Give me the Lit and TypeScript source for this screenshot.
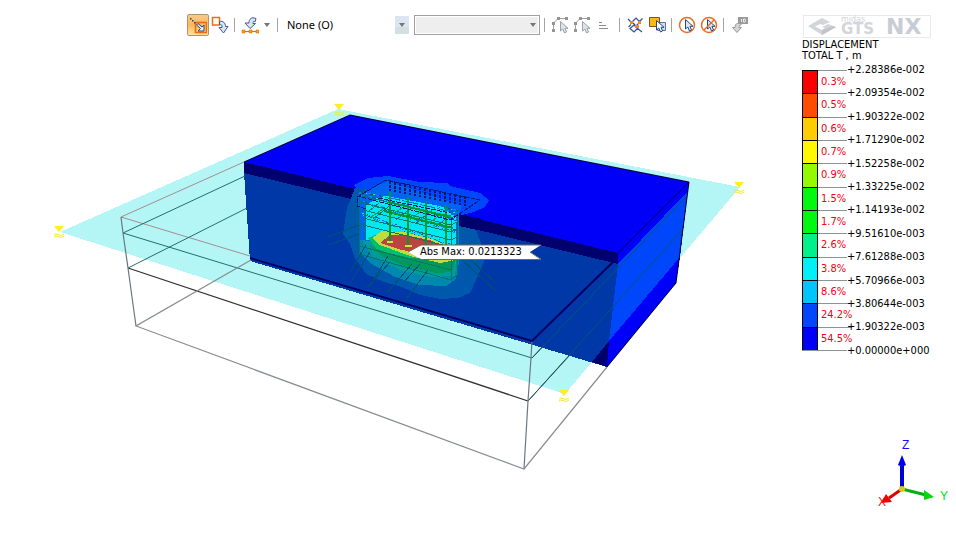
import { LitElement, html, svg, css } from "lit";
import { customElement } from "lit/decorators.js";

const FONT = css`"DejaVu Sans Condensed", "DejaVu Sans", sans-serif`;

type Point = [number, number];

const cursor = (x: number, y: number, fill = "#dbe6f5", stroke = "#27477f") => svg`
  <path transform="translate(${x} ${y})" d="M0.5 0.5V10L2.8 8L4.5 12L6.5 11L5 7.3H8Z" fill=${fill} stroke=${stroke} />`;

const icons = {
  snap: svg`
    <rect x="6.5" y="6.500" width="11" height="10" fill="none" stroke="#f06a10" stroke-width="1.600"/>
    <path d="M1 2h1.500v1.500H1zM3 4h1.500v1.500H3zM5 6h1.500v1.500H5z" fill="#27477f"/>
    <path d="M7.500 9L9 7.500L13 11L15 9V15H9L11.500 12.500Z" fill="#e8eef8" stroke="#27477f"/>`,
  move: svg`
    <rect x="1.500" y="1.500" width="7" height="7.500" fill="none" stroke="#f06a10" stroke-width="1.500"/>
    <path d="M8.500 5.500C12 4.500 14.500 7 14.500 10.500H17L12.500 17L8 11.500L11 11.500C11.500 9 10 8 8.500 8.500Z" fill="#dbe6f5" stroke="#3a5c96"/>`,
  pick: svg`
    <path d="M15 2.500C10.500 0.500 8 3 8 7H4L9 12.500L14.500 7.500L12 7.500C12 5.500 12.500 4.500 14 6Z" fill="#dbe6f5" stroke="#3a5c96"/>
    <path d="M2 15.500H17" stroke="#f06a10"/>
    <path d="M1 14h3v3H1zM8 14h3v3H8zM15 14h3v3h-3z" fill="#f7a800" stroke="#d8540c" stroke-width="0.5"/>`,
  poly: svg`
    <path d="M2.500 15V7L7 2.500H15" fill="none" stroke="#a0a0a0"/>
    <path d="M1 6h3v3H1zM1 13h3v3H1zM6 1h3v3H6zM14 1h3v3h-3z" fill="#959595"/>
    ${cursor(9, 5, "#dde3e6", "#98a2a8")}`,
  list: svg`
    <path d="M4 6.500H7M4 9.500H11M4 12.500H13" stroke="#8c8c8c"/>`,
  mesh: svg`
    <path d="M2 3L6 7M6 6L10 2L14 6L10 10L6 6M8 9L4 12.500L8 16L11.500 12.500L8 9M11 12L16 16M13 6L16.500 2.500M2.500 11L5 8.500" fill="none" stroke="#31548f" stroke-width="1.200"/>
    <path d="M4 5h3v3H4zM12 5h3v3h-3zM9 9h4v3H9z" fill="#f58a12"/>`,
  layers: svg`
    <path d="M9.500 6.500H17.500V14.500H9.500Z" fill="#cfdcf0" stroke="#5876a8"/>
    <path d="M1.500 1.500H11.500V10.500H1.500Z" fill="#fdb813" stroke="#70582a"/>
    ${cursor(8, 4, "#ffffff")}`,
  circle: svg`
    <circle cx="9" cy="9" r="7.500" fill="#fff" stroke="#ee6c22" stroke-width="1.500"/>
    ${cursor(7, 3)}`,
  circleOff: svg`
    <circle cx="9" cy="9" r="7.500" fill="#fff" stroke="#ee6c22" stroke-width="1.500"/>
    ${cursor(7, 3)}
    <path d="M4 14L14 4" stroke="#ee6c22" stroke-width="1.500"/>`,
  tag: svg`
    <path d="M8 1H18V8H8Z" fill="#9a9a9a"/>
    <path d="M11.500 3V6M13.500 3V6H15L15.500 4.500L15 3Z" fill="none" stroke="#fff" stroke-width="0.800"/>
    <path d="M7.500 7.500H11V9C9.500 9 9 10 9 11.500H11.500L7 16.500L2.500 11.500H5C5 9 6 7.500 7.500 7.500Z" fill="#d5d5d5" stroke="#9a9a9a"/>`,
};

@customElement("view-toolbar")
class ViewToolbar extends LitElement {
  static styles = css`
    :host { display: block; }
    .bar { display: flex; align-items: center; height: 36px; padding: 7px 0 1px 187px; }
    .tool { box-sizing: border-box; display: flex; align-items: center; justify-content: center; flex: none; width: 22px; height: 22px; padding: 0; border: 1px solid transparent; background: none; border-radius: 2px; }
    .tool.on { border-color: #b5936a; background: linear-gradient(#f8c98a, #fdb85c 50%, #ffe3a0); }
    .icon { width: 18px; height: 18px; flex: none; }
    .tool.menu { width: 12px; }
    .caret { width: 6px; height: 4px; flex: none; }
    .sep { flex: none; width: 1px; height: 14px; margin: 0 4px 0 3px; background: #a5a5a5; }
    .sep.wide { margin: 0 4px; }
    .field { display: grid; align-items: center; flex: none; }
    .field + .field { margin-left: 5px; }
    .field > * { grid-area: 1 / 1; }
    select { appearance: none; box-sizing: border-box; margin: 0; border: 0; border-radius: 0; color: #000; opacity: 1; }
    .kind { width: 127px; height: 18px; padding: 0 5px; font: 11px/18px "Noto Sans", sans-serif; background: linear-gradient(#dce6f2 60%, #d3dfe0 60%) right / 14px 100% no-repeat #fff; }
    .item { width: 126px; height: 20px; border: 1px solid #a0a0a0; background: #eee; box-shadow: inset 0 0 0 1px #fff; }
    .arrow { width: 6px; height: 4px; justify-self: end; margin-right: 4px; pointer-events: none; }
  `;

  private tool(name: keyof typeof icons, label: string, on = false) {
    return html`<button class="tool ${on ? "on" : ""}" aria-label=${label}>
      <svg class="icon" viewBox="0 0 18 18" aria-hidden="true">${icons[name]}</svg>
    </button>`;
  }

  private caret(cls: string) {
    return html`<svg class=${cls} viewBox="0 0 6 4" aria-hidden="true"><path d="M0 0H6L3 4Z" fill="#707878"/></svg>`;
  }

  render() {
    return html`<div class="bar" role="toolbar" aria-label="Selection">
      ${this.tool("snap", "Snap select", true)}
      ${this.tool("move", "Move selection")}
      <span class="sep"></span>
      ${this.tool("pick", "Pick node")}
      <button class="tool menu" aria-label="Pick options">${this.caret("caret")}</button>
      <span class="sep wide"></span>
      <div class="field">
        <select class="kind" aria-label="Selection filter"><option>None (O)</option></select>
        ${this.caret("arrow")}
      </div>
      <div class="field">
        <select class="item" aria-label="Item" disabled><option></option></select>
        ${this.caret("arrow")}
      </div>
      <span class="sep wide"></span>
      ${this.tool("poly", "Polyline select")}
      ${this.tool("poly", "Polygon select")}
      ${this.tool("list", "List")}
      <span class="sep wide"></span>
      ${this.tool("mesh", "Mesh select")}
      ${this.tool("layers", "Front only")}
      <span class="sep"></span>
      ${this.tool("circle", "Select")}
      ${this.tool("circleOff", "Unselect")}
      <span class="sep"></span>
      ${this.tool("tag", "Select by ID")}
    </div>`;
  }
}

@customElement("model-view")
class ModelView extends LitElement {
  static styles = css`
    :host { display: block; }
    .scene { display: block; width: 100%; height: auto; }
    .label { font: 11px ${FONT}; }
  `;

  private marker([x, y]: Point) {
    return svg`<g transform="translate(${x} ${y})">
      <path d="M-5 0H5L0 6Z" fill="#ffee20"/>
      <path d="M-5 9L-3 8L2 9.500L5 8M-5 11L-3 10L2 11.500L5 10" fill="none" stroke="#f2ea2a"/>
    </g>`;
  }

  private speckle() {
    const colors = ["#0060d8", "#0090e0", "#20e8c0", "#005868", "#0078e8"];
    const out = [];
    for (let i = 0; i < 420; i++) {
      const u = ((i * 37) % 97) / 97;
      const v = ((i * 53) % 89) / 89;
      const x = Math.round(362 + u * 95);
      const y = Math.round(192 + u * 18 + v * v * 36);
      out.push(svg`<rect x=${x} y=${y} width=${1 + (i % 2)} height="1" fill=${colors[i % 5]}/>`);
    }
    return out;
  }

  private pit() {
    const columns: [number, number, number][] = [[390, 192, 241], [408, 197, 246], [426, 201, 250], [446, 205, 252]];
    const piles = Array.from({ length: 16 }, (_, i) => [390 + i * 5, 181 + i]);
    const levels = [203, 210, 217, 225, 232];
    return svg`
      <path d="M354 185L368 178L388 176L420 182L447 183L450 186L480 193L489 200L485 207L474 212L458 216L359 192Z" fill="#0046fa"/>
      <path d="M355 188L347 208L343 234L350 244L355 258L366 274L384 282L402 287L420 295L440 299L458 298L470 293L476 280L484 262L482 246L476 230L468 218L460 214L359 188Z" fill="#0058ac"/>
      <path d="M459 214L482 219V231L459 226Z" fill="#00006e"/>
      <path d="M359 192V250L370 263L395 277L420 285L446 286L456 279L459 262V216Z" fill="#0088b0"/>
      <path d="M361 238L372 256L400 270L430 277L455 276L457 255Z" fill="#009c98"/>
      <path d="M358 195L388 181L462 206L458 218L457 250L360 240Z" fill="#0064f0"/>
      <path d="M366 204L386 196L440 206L456 217V252L410 240L366 240Z" fill="#00e8f4"/>
      ${this.speckle()}
      <path d="M368 238L378 234L396 232L430 239L456 248V264L435 269L405 263L380 253Z" fill="#00c070"/>
      <path d="M368 245L385 252L410 258L456 260L452 272L436 273L405 266L382 256Z" fill="#00985c"/>
      <path d="M372 238L382 231L404 232L432 239L455 249V260L440 263L410 256L380 245Z" fill="#bddc40"/>
      <path d="M380 243L390 235L404 235L430 240L452 250L445 257L420 254L398 249Z" fill="#be4242"/>
      <g fill="none" stroke="#087468">
        ${levels.map((y) => svg`<path d="M359 ${y - 8}L451 ${y + 15}L457 ${y + 12}"/>`)}
        <path d="M359 197V254L451 280V217M365 188V240M457 214V275L451 280M359 246L451 270"/>
        <path d="M369 211L379 203M373 219L393 203M396 220L414 206M415 224L432 210M434 228L452 214"/>
      </g>
      <g fill="none" stroke="#009a28" stroke-width="2">
        ${columns.map(([x, a, b]) => svg`<path d="M${x} ${a}V${b}"/>`)}
        <path d="M388 202L451 217M384 211L453 228"/>
      </g>
      <path d="M371 217L383 209M390 215L404 207M410 220L421 211M428 224L440 215" fill="none" stroke="#00a848"/>
      <path d="M387 241h6v2h-6zM405 245h7v2h-7z" fill="#c8e840"/>
      <g fill="none" stroke="#001878">
        <path d="M357 197L386 180L480 200L450 220L357 196V206L366 209M378 198L450 213" stroke-dasharray="5 1"/>
        ${piles.map(([x, y]) => svg`<path d="M${x} ${y}V${y + 10}" stroke-dasharray="3 1" stroke-width="2"/>`)}
      </g>
      <g stroke="#005070" fill="none">
        <path d="M328 237L359 225M328 245L359 234M350 272L366 245M352 280L370 252M370 286L388 256M367 288L390 262M387 293L412 264M407 298L428 270M403 283L420 264M461 259L497 292M471 260L496 283"/>
      </g>`;
  }

  render() {
    const markers: Point[] = [[59, 226], [339, 104], [739, 182], [564, 390]];
    return html`<svg class="scene" viewBox="0 44 802 499" role="img" aria-label="Displacement contour of excavation model">
      <g shape-rendering="crispEdges">
        <path d="M60 232L338 109L740 187L565 394Z" fill="#b4f6f6"/>
        <path d="M350 115L689 182L618 254L244 162Z" fill="#0000f8"/>
        <path d="M244 162L618 253V265L244 173Z" fill="#00006e"/>
        <path d="M244 173L618 264L607 367L250 261Z" fill="#0038a8"/>
        <path d="M609 341L607 367L592 362Z" fill="#00006e"/>
        <path d="M618 253L689 182L688 192L618 264Z" fill="#0000f8"/>
        <path d="M618 264L688 191L680 257L609 341Z" fill="#0046fa"/>
        <path d="M680 257L676 283L607 367L609 341Z" fill="#0000f8"/>
        ${this.pit()}
      </g>
      <g fill="none" stroke-width="1">
        <path d="M121 217L244 162M121 217L250 256" stroke="#a88c90"/>
        <path d="M123 233L245 176M123 233L532 358M128 268L247 208" stroke="#236e70"/>
        <path d="M532 358L687 196M528 401L682 230" stroke="#005870"/>
        <path d="M528 401L570 355M532 358L544 345" stroke="#305058"/>
        <path d="M128 268L528 401" stroke="#303030" stroke-width="1.300"/>
        <path d="M121 217L123 233L128 268L136 326M532 340L531 358L528 401L524 469" stroke="#687880" stroke-width="1.200"/>
        <path d="M251 260L136 326L524 469L607 367" stroke="#888c90" stroke-width="1.200"/>
        <path d="M250 258L532 341L613 262" stroke="#000060" stroke-width="2"/>
        <path d="M244 162L350 115L689 182L676 283L607 367" stroke="#000030"/>
        <path d="M618 253L689 182" stroke="#000060"/>
      </g>
      ${markers.map((m) => this.marker(m))}
      <path d="M408 252L421 245H541L530 252L541 259H421Z" fill="#fff"/>
      <path d="M408 252L421 245H541M421 259.500H541L530 252" fill="none" stroke="#706858"/>
      <text class="label" x="420" y="255">Abs Max: 0.0213323</text>
    </svg>`;
  }
}

@customElement("result-legend")
class ResultLegend extends LitElement {
  static styles = css`
    :host { display: block; font: 11px/14px ${FONT}; color: #000; }
    .title { margin: 0; font: inherit; line-height: 11px; }
    .title span { display: block; }
    .scale { display: flex; height: 295px; margin-top: 2px; }
    ol { list-style: none; margin: 0; padding: 0; display: flex; flex-direction: column; }
    .bands { width: 45px; margin: 7px 0; }
    .band { flex: 1; display: flex; box-sizing: border-box; }
    .swatch { width: 16px; box-sizing: border-box; border: solid #000; border-width: 1px 1px 0; flex: none; }
    .share { flex: 1; padding: 4px 0 0 3px; border-top: 1px solid #8a9696; color: #f00010; white-space: nowrap; line-height: 14px; }
    .band:last-child { border-bottom: 1px solid #8a9696; }
    .values { justify-content: space-between; }
  `;

  private bands: [string, string][] = [
    ["#fa0000", "0.3%"], ["#ff4c00", "0.5%"], ["#ffcc00", "0.6%"], ["#fff800", "0.7%"],
    ["#94fa00", "0.9%"], ["#00f810", "1.5%"], ["#00f810", "1.7%"], ["#00f08c", "2.6%"],
    ["#00f0fa", "3.8%"], ["#00c4fa", "8.6%"], ["#0046fa", "24.2%"], ["#0000f8", "54.5%"],
  ];

  private values = [
    "+2.28386e-002", "+2.09354e-002", "+1.90322e-002", "+1.71290e-002", "+1.52258e-002",
    "+1.33225e-002", "+1.14193e-002", "+9.51610e-003", "+7.61288e-003", "+5.70966e-003",
    "+3.80644e-003", "+1.90322e-003", "+0.00000e+000",
  ];

  render() {
    return html`
      <h2 class="title"><span>DISPLACEMENT</span><span>TOTAL T , m</span></h2>
      <div class="scale">
        <ol class="bands">${this.bands.map(([color, share]) => html`
          <li class="band"><span class="swatch" style="background:${color}"></span><span class="share">${share}</span></li>`)}
        </ol>
        <ol class="values">${this.values.map((v) => html`<li>${v}</li>`)}</ol>
      </div>`;
  }
}

@customElement("app-root")
class AppRoot extends LitElement {
  static styles = css`
    :host { display: grid; grid-template-columns: minmax(0, 1fr) 154px; min-height: 100vh; background: #fff; }
    .side { display: flex; flex-direction: column; padding-top: 15px; }
    .brand { display: flex; align-items: center; box-sizing: border-box; width: 128px; height: 23px; margin: 0 0 1px 1px; border: 1px solid #e8eaea; color: #d2d6da; }
    .mark { width: 32px; height: 19px; margin-left: 2px; flex: none; }
    .names { display: flex; flex-direction: column; flex: none; width: 43px; margin-left: 3px; padding-bottom: 2px; }
    .midas { font: 8px/7px "DejaVu Sans", sans-serif; }
    .gts { font: bold 15px/12px "DejaVu Sans", sans-serif; }
    .nx { font: bold 22px/21px "DejaVu Sans", sans-serif; color: #c8ccd4; margin-left: 2px; }
    .triad { width: 154px; height: 76px; margin: auto 0 31px; display: block; }
    .axis { font: 12px "Liberation Sans", sans-serif; }
  `;

  render() {
    return html`
      <main>
        <view-toolbar></view-toolbar>
        <model-view></model-view>
      </main>
      <aside class="side">
        <div class="brand">
          <svg class="mark" viewBox="0 0 32 19" aria-hidden="true">
            <path d="M2 9L16 1L24 5L17 8L14 7L9 9.500L16 13L19 11L16 10L22 7L30 10L16 18Z" fill="#d2d6da"/>
            <path d="M16 13V18L30 10L27 9Z" fill="#c0c5ca"/>
          </svg>
          <span class="names"><span class="midas">midas</span><span class="gts">GTS</span></span>
          <span class="nx">NX</span>
        </div>
        <result-legend></result-legend>
        <svg class="triad" viewBox="802 436 154 76" role="img" aria-label="Axes X Y Z">
          <path d="M902 489L889 498" stroke="#e00000" stroke-width="3"/>
          <path d="M881 503L886 494L892 502Z" fill="#f00000"/>
          <path d="M902 489L926 495" stroke="#00b010" stroke-width="3"/>
          <path d="M934 497L924 490V500Z" fill="#00d810"/>
          <path d="M902 489V465" stroke="#0000d0" stroke-width="4"/>
          <path d="M902 455L906 465L902 467L898 465Z" fill="#0000e8"/>
          <circle cx="902" cy="489" r="3" fill="#d8c820"/>
          <text class="axis" x="902" y="449" fill="#1010ff">Z</text>
          <text class="axis" x="940" y="500" fill="#00e010">Y</text>
          <text class="axis" x="878" y="506" fill="#f01010">X</text>
        </svg>
      </aside>`;
  }
}
